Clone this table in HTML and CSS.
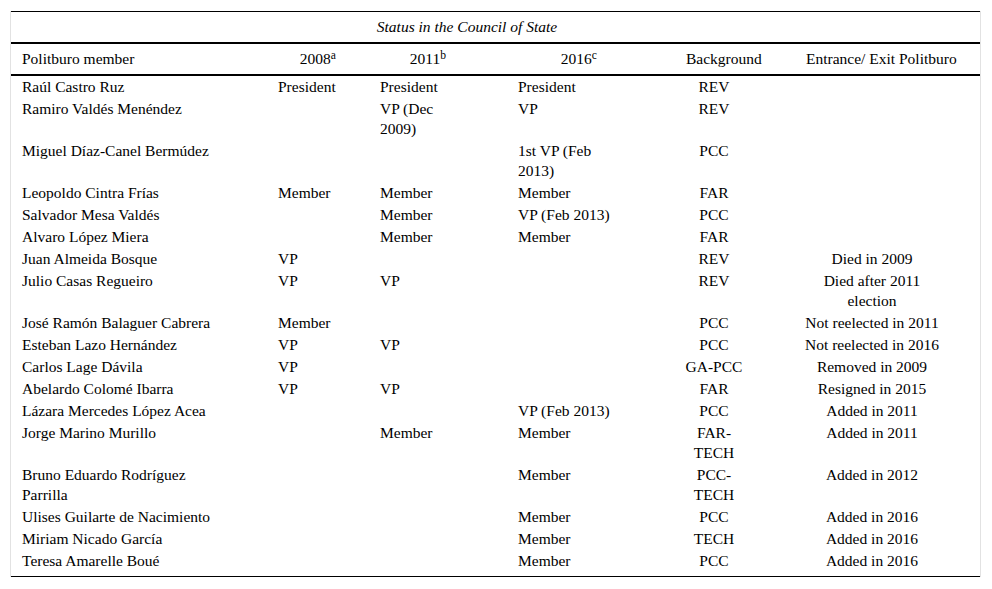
FILE: index.html
```html
<!DOCTYPE html>
<html lang="en">
<head>
<meta charset="utf-8">
<title>Politburo members and the Council of State</title>
<link rel="stylesheet" href="styles.css">
</head>
<body>
<div class="frame">
<table class="tbl">
<colgroup>
<col class="c1"><col class="c2"><col class="c3"><col class="c4"><col class="c5"><col class="c6">
</colgroup>
<thead>
<tr class="h1">
<th></th>
<th colspan="3" class="span"><em>Status in the Council of State</em></th>
<th></th>
<th></th>
</tr>
<tr class="h2">
<th class="hn">Politburo member</th>
<th class="hy1">2008<sup>a</sup></th>
<th class="hy2">2011<sup>b</sup></th>
<th class="hy3">2016<sup>c</sup></th>
<th class="hbg">Background</th>
<th class="hex">Entrance/ Exit Politburo</th>
</tr>
</thead>
<tbody>
<tr><td>Raúl Castro Ruz</td><td>President</td><td>President</td><td>President</td><td>REV</td><td></td></tr>
<tr><td>Ramiro Valdés Menéndez</td><td></td><td>VP (Dec 2009)</td><td>VP</td><td>REV</td><td></td></tr>
<tr><td>Miguel Díaz-Canel Bermúdez</td><td></td><td></td><td>1st VP (Feb 2013)</td><td>PCC</td><td></td></tr>
<tr><td>Leopoldo Cintra Frías</td><td>Member</td><td>Member</td><td>Member</td><td>FAR</td><td></td></tr>
<tr><td>Salvador Mesa Valdés</td><td></td><td>Member</td><td>VP (Feb 2013)</td><td>PCC</td><td></td></tr>
<tr><td>Alvaro López Miera</td><td></td><td>Member</td><td>Member</td><td>FAR</td><td></td></tr>
<tr><td>Juan Almeida Bosque</td><td>VP</td><td></td><td></td><td>REV</td><td>Died in 2009</td></tr>
<tr><td>Julio Casas Regueiro</td><td>VP</td><td>VP</td><td></td><td>REV</td><td>Died after 2011 election</td></tr>
<tr><td>José Ramón Balaguer Cabrera</td><td>Member</td><td></td><td></td><td>PCC</td><td>Not reelected in 2011</td></tr>
<tr><td>Esteban Lazo Hernández</td><td>VP</td><td>VP</td><td></td><td>PCC</td><td>Not reelected in 2016</td></tr>
<tr><td>Carlos Lage Dávila</td><td>VP</td><td></td><td></td><td>GA-PCC</td><td>Removed in 2009</td></tr>
<tr><td>Abelardo Colomé Ibarra</td><td>VP</td><td>VP</td><td></td><td>FAR</td><td>Resigned in 2015</td></tr>
<tr><td>Lázara Mercedes López Acea</td><td></td><td></td><td>VP (Feb 2013)</td><td>PCC</td><td>Added in 2011</td></tr>
<tr><td>Jorge Marino Murillo</td><td></td><td>Member</td><td>Member</td><td>FAR-TECH</td><td>Added in 2011</td></tr>
<tr><td>Bruno Eduardo Rodríguez Parrilla</td><td></td><td></td><td>Member</td><td>PCC-TECH</td><td>Added in 2012</td></tr>
<tr><td>Ulises Guilarte de Nacimiento</td><td></td><td></td><td>Member</td><td>PCC</td><td>Added in 2016</td></tr>
<tr><td>Miriam Nicado García</td><td></td><td></td><td>Member</td><td>TECH</td><td>Added in 2016</td></tr>
<tr class="last"><td>Teresa Amarelle Boué</td><td></td><td></td><td>Member</td><td>PCC</td><td>Added in 2016</td></tr>
</tbody>
</table>
</div>
</body>
</html>
```
FILE: styles.css
```css
html, body {
  margin: 0;
  padding: 0;
  background: #ffffff;
}

body {
  font-family: "Liberation Serif", "Times New Roman", serif;
  font-size: 15.5px;
  line-height: 20px;
  color: #000000;
}

.frame {
  box-sizing: border-box;
  margin: 11px 0 0 10px;
  width: 971px;
  border-left: 1px solid #e2e2e2;
  border-right: 1px solid #e2e2e2;
}

.tbl {
  width: 969px;
  table-layout: fixed;
  border-collapse: separate;
  border-spacing: 0;
}

.c1 { width: 255px; }
.c2 { width: 102px; }
.c3 { width: 138px; }
.c4 { width: 166px; }
.c5 { width: 85px; }
.c6 { width: 223px; }

.tbl th {
  font-weight: normal;
  padding: 5px 0;
  white-space: nowrap;
  text-align: left;
}

.h1 th {
  border-top: 1px solid #000;
  border-bottom: 2px solid #000;
  height: 20px;
}

.h1 .span {
  text-align: center;
  padding-right: 4px;
}

.h2 th {
  border-bottom: 2px solid #000;
}

.hn { padding-left: 11px !important; }
.hy1 { text-align: right !important; padding-right: 32px !important; }
.hy2 { text-align: right !important; padding-right: 60px !important; }
.hy3 { text-align: right !important; padding-right: 75px !important; }
.hbg { padding-left: 14px !important; }
.hex { padding-left: 49px !important; }

.tbl sup {
  font-size: 75%;
  line-height: 0;
  vertical-align: 0.45em;
}

.tbl td {
  vertical-align: top;
  padding: 1px 0;
}

.tbl td:nth-child(1) { padding-left: 11px; padding-right: 44px; }
.tbl td:nth-child(2) { padding-left: 12px; padding-right: 28px; }
.tbl td:nth-child(3) { padding-left: 12px; padding-right: 56px; }
.tbl td:nth-child(4) { padding-left: 12px; padding-right: 52px; }
.tbl td:nth-child(5) { padding-left: 11px; padding-right: 12px; text-align: center; }
.tbl td:nth-child(6) { padding-left: 45px; padding-right: 38px; text-align: center; }

.tbl tr.last td {
  padding-bottom: 5px;
  border-bottom: 1px solid #000;
}
```
